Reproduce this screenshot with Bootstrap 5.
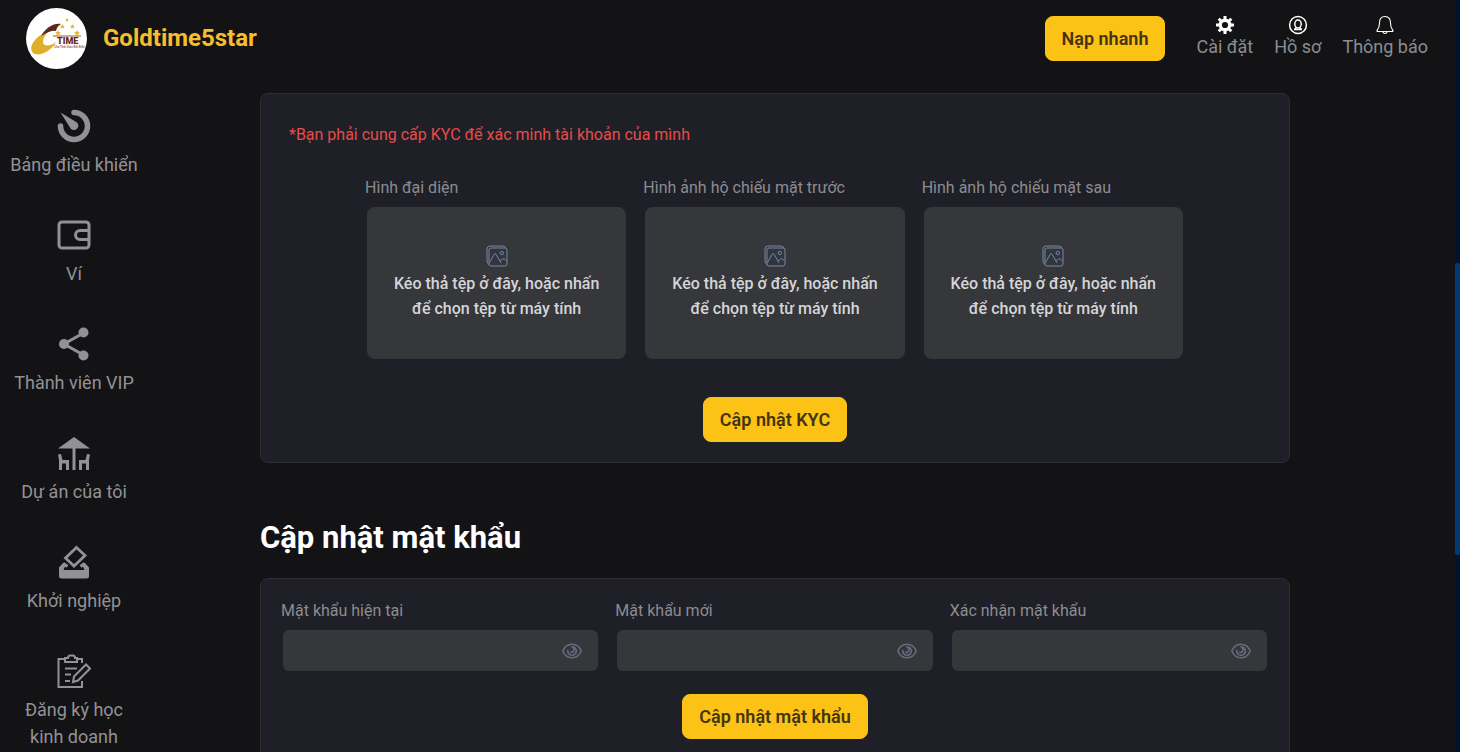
<!DOCTYPE html>
<html lang="vi">
<head>
<meta charset="utf-8">
<meta name="viewport" content="width=device-width, initial-scale=1">
<title>Goldtime5star</title>
<link href="https://cdn.jsdelivr.net/npm/bootstrap@5.3.0/dist/css/bootstrap.min.css" rel="stylesheet">
<style>
  body { background: #131315; color: #8c8c90; font-family: Roboto, "Noto Sans", sans-serif; font-size: 16px; }
  a { color: inherit; text-decoration: none; }
  .shell { height: 100vh; }
  .topbar { height: 78px; padding: 0 27px 2px 26px; }
  .brand-name { color: #f6be2c; font-size: 24px; font-weight: 700; }
  .btn-gold { --bs-btn-bg: #fcc216; --bs-btn-color: #44350f; --bs-btn-hover-bg: #ffd043; --bs-btn-hover-color: #44350f; --bs-btn-active-bg: #e8b10c;
    --bs-btn-border-color: #fcc216; --bs-btn-border-radius: 8px; --bs-btn-padding-x: 16px; --bs-btn-padding-y: 8px;
    --bs-btn-font-size: 18px; --bs-btn-font-weight: 600; --bs-btn-line-height: 27px; }
  .top-links { gap: 21px; margin: -2px 0 0 31px; font-size: 18px; line-height: 24px; }
  .top-links svg { width: 20px; height: 20px; color: #fff; }
  .side { width: 148px; padding-top: 31px; gap: 40px; color: #929295; font-size: 18px; line-height: 27px; }
  .side a { gap: 8px; }
  .side svg { width: 34px; height: 34px; }
  .content { padding: 15px 165px 0 112px; }
  .panel { background: #1f1f27; border: 1px solid #2d2d33; border-radius: 8px; }
  .panel-kyc { padding: 28px 28px 20px; }
  .note { color: #e84c48; line-height: 26px; }
  .uploads { gap: 19px; margin: 26px 78px 38px; }
  .secrets { gap: 19px; margin-bottom: 23px; }
  .field-label { line-height: 28px; margin: 0 0 5px -2px; }
  .drop { background: #36373b; border-radius: 8px; color: #d5d5d7; height: 152px; line-height: 25px; font-weight: 500; cursor: pointer; }
  .drop svg { width: 22px; height: 22px; margin-bottom: 4px; }
  .headline { color: #fff; font-size: 31px; font-weight: 700; line-height: 40px; margin: 55px 0 20px; }
  .panel-pass { padding: 18px 22px 60px; }
  .secret { background: #36373b; border-radius: 6px; height: 41px; padding-right: 15px; }
  .secret input { background: transparent; border: 0; color: #d5d5d7; }
  .secret input:focus { background: transparent; color: #fff; box-shadow: none; }
  .secret button { color: #666b80; }
  .secret svg { width: 22px; height: 18px; }
  .track { width: 5px; background: #03132b; padding-top: 263px; }
  .thumb { height: 292px; background: #04396f; border-radius: 2px; }
</style>
</head>
<body>
<svg class="d-none" xmlns="http://www.w3.org/2000/svg">
  <symbol id="eye" viewBox="0 0 22 18" fill="none" stroke="currentColor" stroke-width="1.6" stroke-linecap="round">
    <path d="M1.800 9C3.600 4.600 7 2.200 11 2.200S18.400 4.600 20.200 9C18.400 13.400 15 15.800 11 15.800S3.600 13.400 1.800 9Z"/>
    <path d="M11 4.700A4.300 4.300 0 1 1 6.800 8.500M11 4.700Q13.500 6.500 13 8.500Q12.300 10.800 9.800 10.200"/>
  </symbol>
  <symbol id="photo" viewBox="0 0 22 22">
    <rect x="3" y="3" width="18" height="18" rx="2" fill="#30353f"/>
    <g fill="none" stroke="#7a86a0" stroke-width="1">
      <path d="M3 19.500Q1 18.500 1 16V4Q1 1 4 1H16.500Q19 1 20 3"/>
      <rect x="3" y="3" width="18" height="18" rx="2"/>
      <path d="M3.500 17.500L8 9.500Q9 7.500 10.200 9.500L15 18M14 15.800L16.500 14Q18 12.800 20.500 16"/>
      <circle cx="15.800" cy="8" r="1.700"/>
    </g>
  </symbol>
  <symbol id="star" viewBox="-5 -5 10 10"><path fill="#e6b536" d="M0-5L1.500-1.600 5-1.400 2.300.9 3.200 4.500 0 2.600-3.200 4.500-2.300.9-5-1.400-1.500-1.600Z"/></symbol>
</svg>
<div class="shell d-flex overflow-hidden">
  <div class="flex-grow-1 d-flex flex-column">
    <header class="topbar d-flex align-items-center flex-shrink-0">
      <a href="#" class="d-flex align-items-center me-auto">
        <svg class="me-3" width="61" height="61" viewBox="0 0 61 61" aria-hidden="true">
          <circle cx="30.500" cy="30.500" r="30.500" fill="#fff"/>
          <path d="M22 24C12 26 1 38 7 45C14 50 27 41 30 34C25 38 17 39 17 34C17 30 19 27 22 24Z" fill="#deb02a"/>
          <path d="M15 28C20 20 27 15 35 16Q31 18 30 23Q25 22 15 28Z" fill="#5a2818"/>
          <path d="M27 28H55" stroke="#8a6048" stroke-width="1"/>
          <text x="31" y="36" font-family="Roboto, sans-serif" font-size="9" font-weight="900" fill="#6b2b18">TIME</text>
          <text x="28" y="40" font-family="Roboto, sans-serif" font-size="3" font-weight="500" fill="#9b5540">Cho Thời Gian Bất Biến</text>
          <use href="#star" x="39" y="10" width="4" height="4"/>
          <use href="#star" x="34" y="16" width="5" height="5"/>
          <use href="#star" x="44" y="16" width="5" height="5"/>
          <use href="#star" x="29" y="22" width="6" height="6"/>
          <use href="#star" x="48" y="22" width="6" height="6"/>
        </svg>
        <span class="brand-name">Goldtime5star</span>
      </a>
      <button type="button" class="btn btn-gold">Nạp nhanh</button>
      <nav class="top-links d-flex">
        <a href="#" class="d-flex flex-column align-items-center">
          <svg viewBox="0 0 20 20" aria-hidden="true"><circle cx="10" cy="10" r="4.800" fill="none" stroke="currentColor" stroke-width="3.400"/><path d="M10 1V4M10 16V19M1 10H4M16 10H19M3.700 3.700L5.800 5.800M14.200 14.200L16.300 16.300M3.700 16.300L5.800 14.200M14.200 5.800L16.300 3.700" stroke="currentColor" stroke-width="3"/></svg>
          Cài đặt</a>
        <a href="#" class="d-flex flex-column align-items-center">
          <svg viewBox="0 0 20 20" fill="none" stroke="currentColor" stroke-width="1.500" aria-hidden="true"><circle cx="10" cy="10" r="8.400"/><ellipse cx="10" cy="9" rx="3.200" ry="4"/><path d="M8.400 12Q8.500 13.500 6 14.400M11.600 12Q11.500 13.500 14 14.400M6 14.400H14"/></svg>
          Hồ sơ</a>
        <a href="#" class="d-flex flex-column align-items-center">
          <svg viewBox="0 0 20 20" fill="none" stroke="currentColor" stroke-width="1.100" stroke-linejoin="round" aria-hidden="true"><path d="M10 1.500C6 1.500 4.500 4.500 4.500 8C4.500 12.500 3.500 13.500 2 15.500Q1.700 16.500 3 16.500H17Q18.300 16.500 18 15.500C16.500 13.500 15.500 12.500 15.500 8C15.500 4.500 14 1.500 10 1.500ZM7.500 16.500Q8.500 18.500 10 18.500T12.500 16.500"/></svg>
          Thông báo</a>
      </nav>
    </header>
    <div class="d-flex flex-grow-1 overflow-hidden">
      <nav class="side d-flex flex-column flex-shrink-0 text-center">
        <a href="#" class="d-flex flex-column align-items-center">
          <svg viewBox="0 0 34 34" aria-hidden="true"><path d="M17 3.500A13.500 13.500 0 1 1 3.500 17" fill="none" stroke="currentColor" stroke-width="5.500" stroke-linecap="round"/><path d="M3.500 3.500L20 13.500A4.200 4.200 0 1 1 13.800 19.800Z" fill="currentColor"/></svg>
          Bảng điều khiển</a>
        <a href="#" class="d-flex flex-column align-items-center">
          <svg viewBox="0 0 34 34" fill="none" stroke="currentColor" stroke-width="3" aria-hidden="true"><rect x="2" y="4" width="30" height="26" rx="3"/><path d="M32 12.500H23A4.500 4.500 0 0 0 23 21.500H32"/></svg>
          Ví</a>
        <a href="#" class="d-flex flex-column align-items-center">
          <svg viewBox="0 0 34 34" fill="currentColor" aria-hidden="true"><path d="M26.500 6L7 17L26.500 28" fill="none" stroke="currentColor" stroke-width="3"/><circle cx="26.500" cy="5.500" r="5"/><circle cx="7" cy="17" r="5"/><circle cx="26.500" cy="28.500" r="5"/></svg>
          Thành viên VIP</a>
        <a href="#" class="d-flex flex-column align-items-center">
          <svg viewBox="0 0 34 34" fill="currentColor" aria-hidden="true"><path d="M17 1L33 12.500H1Z"/><path d="M15.500 11H18.500V34H15.500ZM1 18.500L4 18L5.500 24H12V34H9V27.500H5V34H2V24ZM33 18.500L30 18L28.500 24H22V34H25V27.500H29V34H32V24Z"/></svg>
          Dự án của tôi</a>
        <a href="#" class="d-flex flex-column align-items-center">
          <svg viewBox="0 0 34 34" aria-hidden="true"><path d="M19.500 2.500L28 10.500L17 21L8.500 13Z" fill="none" stroke="currentColor" stroke-width="2.800"/><path d="M6.500 18.500L10.500 21.500M27.500 18.500L23.500 21.500" stroke="currentColor" stroke-width="3"/><path d="M6.500 17.500L8.500 20.500L6.500 25H27.500L25.500 20.500L27.500 17.500L32 22.500V31Q32 33.500 29.500 33.500H4.500Q2 33.500 2 31V22.500Z" fill="currentColor"/></svg>
          Khởi nghiệp</a>
        <a href="#" class="d-flex flex-column align-items-center">
          <svg viewBox="0 0 34 34" fill="none" stroke="currentColor" stroke-width="2" aria-hidden="true"><path d="M25 9V5H1.500V33H25V27"/><path d="M8 8V4H11Q11 1.500 13 1.500H16Q18 1.500 18 4H20V8Z" fill="#131315"/><path d="M8 14.500H20M8 20.500H14M8 27H13"/><path d="M17 22.500L29 10.500L33 14.500L21 26.500L16 28Z"/></svg>
          <span>Đăng ký học<br>kinh doanh</span></a>
      </nav>
      <main class="content flex-grow-1">
        <form class="panel panel-kyc">
          <div class="note">*Bạn phải cung cấp KYC để xác minh tài khoản của mình</div>
          <div class="uploads d-flex">
            <div class="flex-fill w-100">
              <label class="field-label d-block" for="avatar">Hình đại diện</label>
              <label class="drop d-flex flex-column align-items-center justify-content-center text-center"><svg aria-hidden="true"><use href="#photo"/></svg><span>Kéo thả tệp ở đây, hoặc nhấn<br>để chọn tệp từ máy tính</span><input class="visually-hidden" type="file" id="avatar"></label>
            </div>
            <div class="flex-fill w-100">
              <label class="field-label d-block" for="front">Hình ảnh hộ chiếu mặt trước</label>
              <label class="drop d-flex flex-column align-items-center justify-content-center text-center"><svg aria-hidden="true"><use href="#photo"/></svg><span>Kéo thả tệp ở đây, hoặc nhấn<br>để chọn tệp từ máy tính</span><input class="visually-hidden" type="file" id="front"></label>
            </div>
            <div class="flex-fill w-100">
              <label class="field-label d-block" for="back">Hình ảnh hộ chiếu mặt sau</label>
              <label class="drop d-flex flex-column align-items-center justify-content-center text-center"><svg aria-hidden="true"><use href="#photo"/></svg><span>Kéo thả tệp ở đây, hoặc nhấn<br>để chọn tệp từ máy tính</span><input class="visually-hidden" type="file" id="back"></label>
            </div>
          </div>
          <div class="text-center"><button type="button" class="btn btn-gold">Cập nhật KYC</button></div>
        </form>
        <h2 class="headline">Cập nhật mật khẩu</h2>
        <form class="panel panel-pass">
          <div class="secrets d-flex">
            <div class="flex-fill w-100">
              <label class="field-label d-block" for="current">Mật khẩu hiện tại</label>
              <div class="secret d-flex align-items-center"><input class="form-control" type="password" id="current"><button type="button" class="btn p-0 border-0 d-flex" aria-label="Hiện mật khẩu"><svg><use href="#eye"/></svg></button></div>
            </div>
            <div class="flex-fill w-100">
              <label class="field-label d-block" for="fresh">Mật khẩu mới</label>
              <div class="secret d-flex align-items-center"><input class="form-control" type="password" id="fresh"><button type="button" class="btn p-0 border-0 d-flex" aria-label="Hiện mật khẩu"><svg><use href="#eye"/></svg></button></div>
            </div>
            <div class="flex-fill w-100">
              <label class="field-label d-block" for="confirm">Xác nhận mật khẩu</label>
              <div class="secret d-flex align-items-center"><input class="form-control" type="password" id="confirm"><button type="button" class="btn p-0 border-0 d-flex" aria-label="Hiện mật khẩu"><svg><use href="#eye"/></svg></button></div>
            </div>
          </div>
          <div class="text-center"><button type="button" class="btn btn-gold">Cập nhật mật khẩu</button></div>
        </form>
      </main>
    </div>
  </div>
  <div class="track flex-shrink-0"><div class="thumb"></div></div>
</div>
<script src="https://cdn.jsdelivr.net/npm/bootstrap@5.3.0/dist/js/bootstrap.bundle.min.js"></script>
</body>
</html>
